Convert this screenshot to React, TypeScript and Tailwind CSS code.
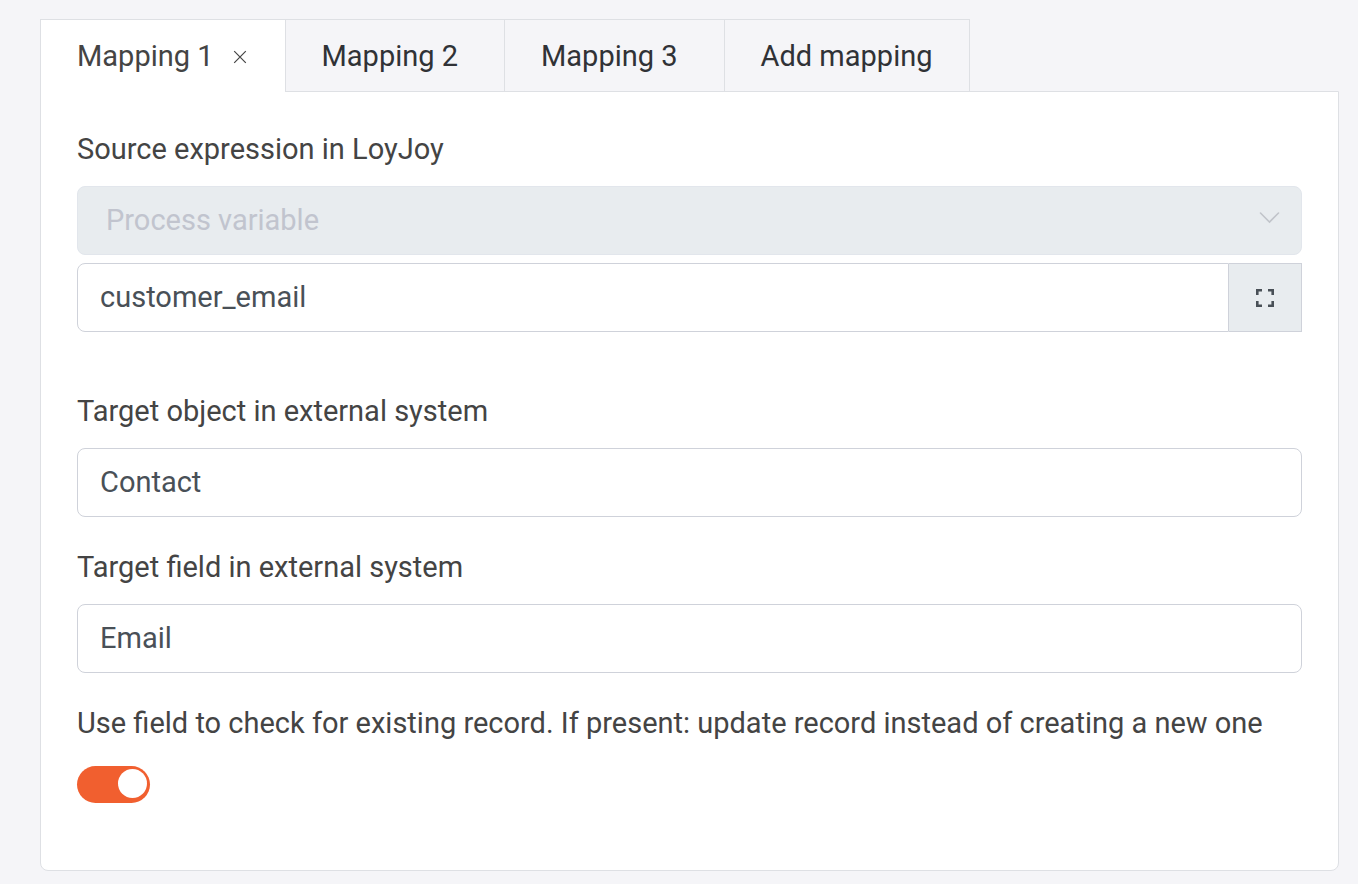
import React, { useState } from "react";

const field =
  "h-[69px] w-full min-w-0 border border-[#cfd2da] bg-white px-[22px] pb-0.5 text-[29px] text-[#495057] outline-none";

function TextField({ id, label, value }: { id: string; label: string; value: string }) {
  return (
    <div className="flex flex-col gap-[18px]">
      <label htmlFor={id} className="leading-[38px]">{label}</label>
      <input id={id} type="text" defaultValue={value} className={`${field} rounded-lg`} />
    </div>
  );
}

export default function App() {
  const [update, setUpdate] = useState(true);
  return (
    <main className="min-h-screen bg-[#f5f5f8] pt-[19px] pr-[19px] pb-[13px] pl-10 font-['Roboto',sans-serif] text-[29px] text-[#444444]">
      <nav className="relative z-10 -mb-px flex h-[73px] leading-[38px] text-[#303236]">
        <div className="flex items-center gap-[19px] border-t border-l border-[#dee0e4] bg-white pr-[38px] pl-9 text-[#444444]">
          <button type="button">Mapping 1</button>
          <button type="button" aria-label="Remove Mapping 1" className="pt-0.5">
            <svg width="14" height="14" viewBox="0 0 14 14" fill="none" stroke="currentColor" strokeWidth="1.2">
              <path d="M1.2 1.2l11.6 11.6M12.8 1.2l-11.6 11.6" />
            </svg>
          </button>
        </div>
        <button type="button" className="border border-[#dee0e4] pr-[46px] pl-9">Mapping 2</button>
        <button type="button" className="border border-l-0 border-[#dee0e4] pr-[46px] pl-9">Mapping 3</button>
        <button type="button" className="border border-l-0 border-[#dee0e4] px-9">Add mapping</button>
      </nav>
      <section className="flex min-h-[780px] flex-col rounded-b-lg border border-[#dee0e4] bg-white px-9 pt-[38px]">
        <div className="flex flex-col">
          <label htmlFor="source" className="mb-[18px] leading-[38px]">Source expression in LoyJoy</label>
          <div className="relative">
            <select
              id="source"
              disabled
              className="h-[69px] w-full appearance-none rounded-lg border border-[#e2e6ec] bg-[#e8ecef] px-7 text-[29px] text-[#c1c4ce] opacity-100"
            >
              <option>Process variable</option>
            </select>
            <svg className="pointer-events-none absolute top-[25px] right-[22px]" width="22" height="14" viewBox="0 0 22 14" fill="none" stroke="#c1c4ca" strokeWidth="1.6" strokeLinecap="round">
              <path d="M2.5 2l9 9 9-9" />
            </svg>
          </div>
          <div className="mt-2 flex">
            <input aria-label="Variable name" type="text" defaultValue="customer_email" className={`${field} rounded-l-lg`} />
            <button type="button" aria-label="Expand" className="flex w-[73px] shrink-0 items-center justify-center border border-l-0 border-[#cfd2da] bg-[#e8ecef]">
              <svg width="18" height="18" viewBox="0 0 18 18" fill="none" stroke="#495057" strokeWidth="2.6">
                <path d="M1.3 6V1.3H6M12 1.3h4.7V6M16.7 12v4.7H12M6 16.7H1.3V12" />
              </svg>
            </button>
          </div>
        </div>
        <div className="mt-[60px] flex flex-col gap-[31px]">
          <TextField id="object" label="Target object in external system" value="Contact" />
          <TextField id="field" label="Target field in external system" value="Email" />
          <div className="flex flex-col items-start gap-6">
            <label htmlFor="update" className="leading-[38px]">
              Use field to check for existing record. If present: update record instead of creating a new one
            </label>
            <input
              id="update"
              type="checkbox"
              role="switch"
              checked={update}
              onChange={(e) => setUpdate(e.target.checked)}
              className="flex h-[37px] w-[73px] appearance-none items-start rounded-full bg-gray-400 p-[3px] before:size-[29px] before:rounded-full before:bg-white before:content-[''] checked:justify-end checked:bg-[#f15f2f]"
            />
          </div>
        </div>
      </section>
    </main>
  );
}
